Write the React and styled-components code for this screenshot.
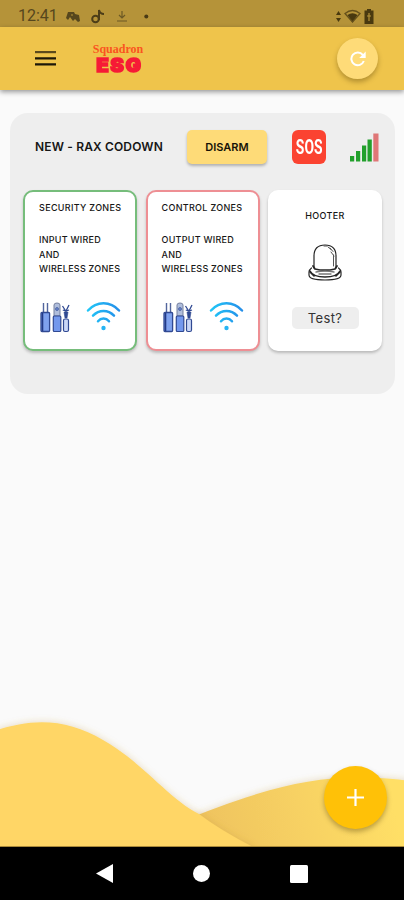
import React from "react";
import styled, { createGlobalStyle } from "styled-components";

const GlobalStyle = createGlobalStyle`
  * { box-sizing: border-box; }
  body { margin: 0; background: #fafafa; font-family: Inter, "Liberation Sans", sans-serif; color: #161616; }
  svg { display: block; flex: none; }
`;

const Screen = styled.div`
  position: relative;
  width: 404px;
  height: 900px;
  display: flex;
  flex-direction: column;
  overflow: hidden;
  background: #fafafa;
`;

const StatusBar = styled.div`
  flex: none;
  height: 27px;
  padding: 5px 30px 0 18px;
  display: flex;
  align-items: center;
  background: #b59339;
`;

const Clock = styled.span`
  width: 48px;
  font: 400 16px/22px Roboto, sans-serif;
  color: #56461d;
`;

const StatusGroup = styled.div`
  display: flex;
  align-items: center;
  gap: ${(p) => p.$gap}px;
  margin-left: ${(p) => (p.$end ? "auto" : 0)};
`;

const AppBar = styled.header`
  flex: none;
  height: 63px;
  padding: 0 26px 0 35px;
  display: flex;
  align-items: center;
  background: #efc44b;
  box-shadow: 0 2px 5px rgba(0, 0, 0, 0.4);
`;

const Brand = styled.div`
  width: 52px;
  margin-left: 36px;
  display: flex;
  flex-direction: column;
  align-items: center;
`;

const BrandName = styled.span`
  font: 700 12px/13px "Liberation Serif", serif;
  color: #fa5520;
`;

const BrandMark = styled.span`
  font: 900 19px/19px Inter, sans-serif;
  letter-spacing: 1.4px;
  margin-right: -2px;
  color: #f61b36;
  -webkit-text-stroke: 1.5px #f61b36;
  transform: scaleX(1.08);
`;

const RoundButton = styled.button`
  width: ${(p) => p.$size}px;
  height: ${(p) => p.$size}px;
  padding: 0;
  border: 0;
  border-radius: 50%;
  display: grid;
  place-items: center;
  background: ${(p) => p.$color};
  box-shadow: 0 3px 5px rgba(70, 50, 0, 0.35);
`;

const RefreshButton = styled(RoundButton)`
  margin-left: auto;
`;

const AddButton = styled(RoundButton)`
  position: absolute;
  right: 17px;
  bottom: 71px;
`;

const Panel = styled.main`
  flex: none;
  margin: 23px 9px 0 10px;
  height: 281px;
  padding: 17px 13px 0;
  border-radius: 18px;
  background: #eeeeee;
`;

const PanelHeader = styled.div`
  height: 34px;
  padding: 0 3px 0 12px;
  display: flex;
  align-items: center;
`;

const DeviceName = styled.h1`
  width: 152px;
  margin: 0;
  font-size: 12px;
  font-weight: 600;
  line-height: 18px;
  letter-spacing: 0.15px;
  white-space: nowrap;
`;

const DisarmButton = styled.button`
  width: 80px;
  height: 34px;
  padding: 0;
  border: 0;
  border-radius: 5px;
  background: #fedb78;
  box-shadow: 0 2px 3px rgba(0, 0, 0, 0.26);
  font: 600 11px/16px Inter, sans-serif;
  color: #171307;
`;

const SosBadge = styled.div`
  width: 34px;
  height: 34px;
  margin: 0 24px 0 25px;
  border-radius: 6px;
  display: flex;
  justify-content: center;
  background: #fb4331;
  font: 700 21px/34px Roboto, sans-serif;
  color: #fff;
`;

const SosText = styled.span`
  flex: none;
  transform: scaleX(0.66);
`;

const Cards = styled.div`
  margin-top: 26px;
  display: grid;
  grid-template-columns: repeat(3, 114px);
  column-gap: 8.5px;
`;

const Card = styled.section`
  height: 161px;
  border: 2px solid ${(p) => p.$edge};
  border-radius: 10px;
  background: #fff;
  box-shadow: 0 2px 3px rgba(0, 0, 0, 0.22);
  display: flex;
  flex-direction: column;
  align-items: ${(p) => (p.$centered ? "center" : "stretch")};
  padding: ${(p) => (p.$centered ? "17px 0 0" : "9px 11px 0 14px")};
`;

const Label = styled.span`
  font-size: 9px;
  font-weight: 500;
  line-height: 14px;
  letter-spacing: 0.32px;
  white-space: nowrap;
`;

const ZoneText = styled.p`
  margin: 18px 0 0;
  font-size: 9px;
  font-weight: 500;
  line-height: 14.5px;
  letter-spacing: 0.26px;
  white-space: pre;
`;

const ZoneIcons = styled.div`
  width: 82px;
  margin-top: 25px;
  padding-left: 1px;
  display: flex;
  justify-content: space-between;
`;

const HooterFrame = styled.div`
  margin-top: 21px;
`;

const TestButton = styled.button`
  width: 67px;
  height: 22px;
  margin-top: 26px;
  padding: 0;
  border: 0;
  border-radius: 5px;
  background: #eeeeee;
  font: 400 13px/22px Inter, sans-serif;
  letter-spacing: 0.4px;
  color: #333;
`;

const Scenery = styled.div`
  margin-top: auto;
  height: 137px;
`;

const NavBar = styled.nav`
  flex: none;
  height: 53px;
  padding: 0 96px;
  display: flex;
  align-items: center;
  justify-content: space-between;
  background: #000;
`;

function ProbeIcon() {
  return (
    <svg width="30" height="31" viewBox="0 0 30 31" fill="none" stroke="#304992">
      <path d="M3.5 10V1M7.5 10V1" strokeWidth="1.4" stroke="#52659d" />
      <rect x="1" y="10.5" width="8.6" height="19" rx="1" fill="#7fa2ee" strokeWidth="1.3" />
      <path d="M2.5 11v18" stroke="#223a86" strokeWidth="1.6" />
      <path d="M14 14V3q0-2 3-2t3 2v11z" fill="#b0bedc" stroke="#75809f" />
      <circle cx="17" cy="7" r="1.5" fill="#6882cc" stroke="#47619f" strokeWidth=".8" />
      <rect x="13.3" y="14" width="7.5" height="15.5" rx="1" fill="#7398ed" strokeWidth="1.2" />
      <path d="M26 15V9M22.5 4l3.2 5M29 3l-3 6M25.8 9l-3-1M26 9l3-1" strokeWidth="1.3" />
      <path d="M24 10h4l-1 6h-2z" fill="#304992" strokeWidth=".6" />
      <rect x="23.5" y="17" width="5" height="12.5" rx="1.5" fill="#cad7f7" strokeWidth="1.2" />
    </svg>
  );
}

function WirelessIcon({ id }) {
  return (
    <svg width="35" height="29" viewBox="0 0 35 29">
      <defs>
        <linearGradient id={id} x1="0" y1="0" x2="35" y2="0" gradientUnits="userSpaceOnUse">
          <stop stopColor="#20c9f8" /><stop offset="1" stopColor="#258be8" />
        </linearGradient>
      </defs>
      <g fill="none" stroke={`url(#${id})`} strokeWidth="2.5" strokeLinecap="round">
        <path d="M2 8.5Q8.5 1.3 17.5 1.3T33 8.5M7 13.7q4.5-4.7 10.5-4.7t10.5 4.7M12 19.2q2.3-2.7 5.5-2.7t5.5 2.7" />
      </g>
      <circle cx="17.5" cy="26" r="2.2" fill="#26b4f4" />
    </svg>
  );
}

function HooterIcon() {
  return (
    <svg width="34" height="37" viewBox="0 0 34 37" fill="none" stroke="#252525" strokeWidth="1.2" strokeLinecap="round">
      <path d="M6 24V12Q6 1 17 1t11 11v12" />
      <path d="M16 2h3M20 3l3 2.5M22 4l3 3.5M23 8l3 4M25.5 11v11" strokeWidth="1" stroke="#555" />
      <path d="M5 22l2 3q10 2.5 20 0l2-3" strokeWidth="1.8" />
      <path d="M3.5 24Q1 26 1 28v3q0 5 16 5t16-5v-3q0-2-2.5-4" />
      <path d="M2 27q3 6 15 6t15-6M2 28l4 4M32 28l-4 4" strokeWidth="1.6" />
      <path d="M8 28q9-2 18 0M11 30h12" stroke="#777" strokeWidth="1.3" />
    </svg>
  );
}

function SignalIcon() {
  return (
    <svg width="29" height="29" viewBox="0 0 29 29" fill="#22a02c">
      <path d="M0 23h4.2v5.5H0zM6 18h4.2v10.5H6zM12 12.5h4.2v16H12zM17.5 6.5h4.3v22h-4.3z" />
      <path d="M23.3.5h5.2v28h-5.2z" fill="#df7777" />
    </svg>
  );
}

function ZoneCard({ edge, title, kind, id }) {
  return (
    <Card $edge={edge}>
      <Label>{title}</Label>
      <ZoneText>{`${kind} WIRED\nAND\nWIRELESS ZONES`}</ZoneText>
      <ZoneIcons><ProbeIcon /><WirelessIcon id={id} /></ZoneIcons>
    </Card>
  );
}

export default function App() {
  return (
    <>
      <GlobalStyle />
      <Screen>
        <StatusBar>
          <Clock>12:41</Clock>
          <StatusGroup $gap={11}>
            <svg width="14" height="11" viewBox="0 0 14 11" fill="#56461d">
              <path d="M0 7L2 1h6l1 2 4 1 1 6-2 1-3-3-2 2-3-4-2 3zM5 4.5h2v-1H5z" fillRule="evenodd" />
            </svg>
            <svg width="14" height="15" viewBox="0 0 14 15" fill="none" stroke="#4c3d18" strokeWidth="2">
              <circle cx="4.5" cy="10" r="3.3" /><path d="M8 11V1q1 4 5 4" />
            </svg>
            <svg width="12" height="13" viewBox="0 0 12 13" stroke="#6c5925" fill="none" strokeWidth="1.2">
              <path d="M6 1v6M3 5l3 3 3-3M1 11h10" />
            </svg>
            <svg width="14" height="5" viewBox="0 0 14 5"><circle cx="7.3" cy="2.5" r="2" fill="#493a15" /></svg>
          </StatusGroup>
          <StatusGroup $gap={3} $end>
            <svg width="5" height="11" viewBox="0 0 5 11" fill="#49390f"><path d="M2.5 0L5 4H0zM0 7h5l-2.5 4z" /></svg>
            <svg width="17" height="14" viewBox="0 0 17 14" fill="#49390f">
              <path d="M3.5 6q5-3.5 10 0l-5 7.5z" /><path d="M1 4.5Q8.5-1.5 16 4.5L8.5 13z" fill="none" stroke="#65501b" strokeWidth="1.3" />
            </svg>
            <svg width="10" height="15" viewBox="0 0 10 15"><path d="M3 0h4v1.5h2.5V15h-9V1.5H3z" fill="#49390f" /><path d="M5 4v8M3 7h4" stroke="#b59339" strokeWidth="1.2" /></svg>
          </StatusGroup>
        </StatusBar>
        <AppBar>
          <svg width="21" height="15" viewBox="0 0 21 15" fill="#1d1708">
            <path d="M0 0h21v2.2H0z" fill="#5c4a1c" /><path d="M0 6.2h21v2.2H0zM0 12.3h21v2.2H0z" />
          </svg>
          <Brand><BrandName>Squadron</BrandName><BrandMark>ESG</BrandMark></Brand>
          <RefreshButton $size={41} $color="#fedb78" aria-label="Refresh">
            <svg width="16" height="16" viewBox="0 0 16 16" fill="none" stroke="#fff" strokeWidth="2">
              <path d="M13.8 10A6.4 6.4 0 1 1 12.8 3.8L14 5" /><path d="M15.7.5V7H9.2z" fill="#fff" stroke="none" />
            </svg>
          </RefreshButton>
        </AppBar>
        <Panel>
          <PanelHeader>
            <DeviceName>NEW - RAX CODOWN</DeviceName>
            <DisarmButton>DISARM</DisarmButton>
            <SosBadge><SosText>SOS</SosText></SosBadge>
            <SignalIcon />
          </PanelHeader>
          <Cards>
            <ZoneCard edge="#76bd7b" title="SECURITY ZONES" kind="INPUT" id="inputSignal" />
            <ZoneCard edge="#ee8f94" title="CONTROL ZONES" kind="OUTPUT" id="outputSignal" />
            <Card $edge="#fff" $centered>
              <Label>HOOTER</Label>
              <HooterFrame><HooterIcon /></HooterFrame>
              <TestButton>Test?</TestButton>
            </Card>
          </Cards>
        </Panel>
        <Scenery>
          <svg width="404" height="137" viewBox="0 0 404 137">
            <defs>
              <linearGradient id="hill" x1="210" y1="125" x2="390" y2="80" gradientUnits="userSpaceOnUse">
                <stop stopColor="#efc45f" /><stop offset=".5" stopColor="#f7d163" /><stop offset="1" stopColor="#ffdf66" />
              </linearGradient>
              <filter id="hillShadow" x="-10%" y="-10%" width="120%" height="120%">
                <feDropShadow dx="0" dy="-1" stdDeviation="3" floodColor="#b98d35" floodOpacity=".25" />
              </filter>
            </defs>
            <path filter="url(#hillShadow)" fill="url(#hill)" d="M190 108C240 88 295 69 345 68Q378 66 410 71V145H190z" />
            <path filter="url(#hillShadow)" fill="#ffd666" d="M-5 21C35 7 69 10 103 30C141 51 169 89 199 104Q220 120 253 137V145H-5z" />
            <path d="M0 136.5h404" stroke="#a9893a" />
          </svg>
        </Scenery>
        <AddButton $size={63} $color="#ffc107" aria-label="Add">
          <svg width="17" height="17" viewBox="0 0 17 17" stroke="#fff" strokeWidth="2.2"><path d="M8.5 0v17M0 8.5h17" /></svg>
        </AddButton>
        <NavBar>
          <svg width="17" height="19" viewBox="0 0 17 19"><path d="M17 0v19L0 9.5z" fill="#fff" /></svg>
          <svg width="17" height="17" viewBox="0 0 17 17"><circle cx="8.5" cy="8.5" r="8.5" fill="#fff" /></svg>
          <svg width="18" height="18" viewBox="0 0 18 18"><rect width="18" height="18" rx="1.5" fill="#fff" /></svg>
        </NavBar>
      </Screen>
    </>
  );
}
